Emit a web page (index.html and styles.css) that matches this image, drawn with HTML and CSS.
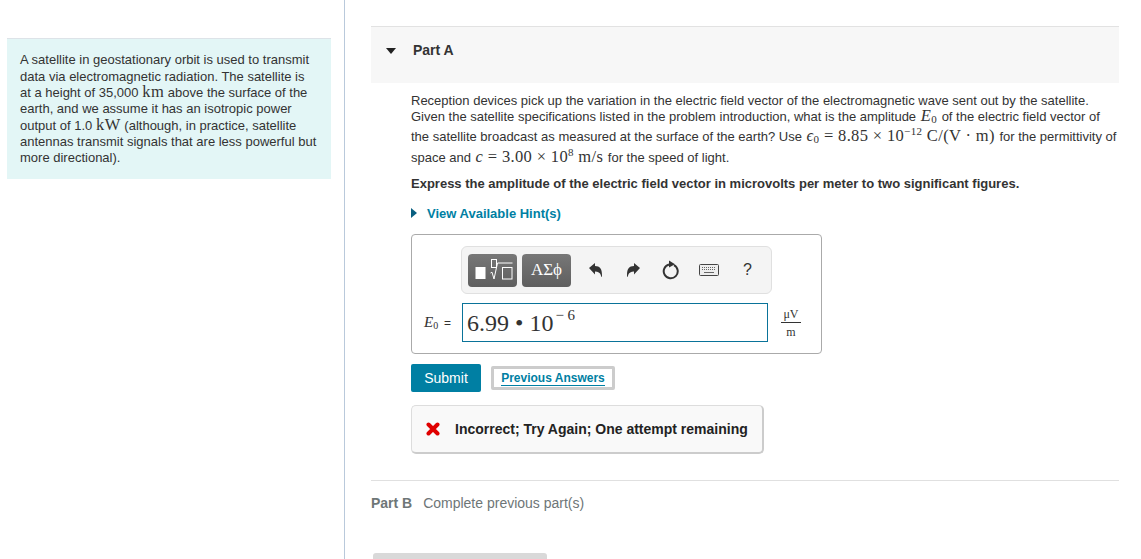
FILE: index.html
```html
<!DOCTYPE html>
<html lang="en">
<head>
    <meta charset="UTF-8">
    <meta name="viewport" content="width=device-width, initial-scale=1.0">
    <title>Part A</title>
    <link rel="stylesheet" href="styles.css">
</head>
<body>
    <div class="page">
        <aside class="left-col">
            <div class="intro">
                A satellite in geostationary orbit is used to transmit<br>
                data via electromagnetic radiation. The satellite is<br>
                at a height of 35,000 <span class="math">km</span> above the surface of the<br>
                earth, and we assume it has an isotropic power<br>
                output of 1.0 <span class="math">kW</span> (although, in practice, satellite<br>
                antennas transmit signals that are less powerful but<br>
                more directional).
            </div>
        </aside>
        <main class="right-col">
            <div class="part-head">
                <span class="caret-down"></span>
                <span class="part-title">Part A</span>
            </div>
            <div class="part-body">
                <p class="question">
                    <span class="q-line">Reception devices pick up the variation in the electric field vector of the electromagnetic wave sent out by the satellite.</span>
                    <span class="q-line">Given the satellite specifications listed in the problem introduction, what is the amplitude <span class="math big"><i>E</i><sub>0</sub></span> of the electric field vector of</span>
                    <span class="q-line tall">the satellite broadcast as measured at the surface of the earth? Use <span class="math big"><i>ϵ</i><sub>0</sub> = 8.85 × 10<sup>−12</sup> C/(V · m)</span> for the permittivity of</span>
                    <span class="q-line tall">space and <span class="math big"><i>c</i> = 3.00 × 10<sup>8</sup> m/s</span> for the speed of light.</span>
                </p>
                <p class="express">Express the amplitude of the electric field vector in microvolts per meter to two significant figures.</p>
                <div class="hint-row">
                    <span class="caret-right"></span>
                    <span class="hint-link">View Available Hint(s)</span>
                </div>

                <div class="answer-box">
                    <div class="toolbar">
                        <div class="tool-btn">
                            <svg width="40" height="26" viewBox="0 0 40 26">
                                <rect x="2.500" y="10" width="10" height="12" fill="#fff"/>
                                <rect x="18.500" y="2.500" width="5" height="8" fill="none" stroke="#fff"/>
                                <path d="M17.500 16l1.500-.8 2 6.800 3.500-16h15" fill="none" stroke="#fff"/>
                                <rect x="29.500" y="10.500" width="9.500" height="11.500" fill="none" stroke="#fff"/>
                            </svg>
                        </div>
                        <div class="tool-btn greek">ΑΣϕ</div>
                        <div class="tool-icons">
                            <svg width="16" height="16" viewBox="0 0 16 16">
                                <path d="M1 6l6-5v3c5 0 7 3 7 9 0 1-.2 2-.5 2-.4 0-.4-1-.7-2-.6-2.400-2.800-3.600-5.800-3.600v3z" fill="#333"/>
                            </svg>
                            <svg width="16" height="16" viewBox="0 0 16 16">
                                <path d="M15 6l-6-5v3c-5 0-7 3-7 9 0 1 .2 2 .5 2 .4 0 .4-1 .7-2 .6-2.400 2.800-3.600 5.800-3.600v3z" fill="#333"/>
                            </svg>
                            <svg width="18" height="20" viewBox="0 0 18 20">
                                <path d="M7 4.500a7 7 0 1 0 5 .6" fill="none" stroke="#333" stroke-width="2"/>
                                <path d="M7 0.500l6 3.800-6 3.200z" fill="#333"/>
                            </svg>
                            <svg width="20" height="12" viewBox="0 0 20 12">
                                <rect x="0.500" y="0.500" width="19" height="11" rx="1" fill="#eee" stroke="#444"/>
                                <path d="M3 3.500h14M3 5.500h14" stroke="#666" stroke-dasharray="1 1"/>
                                <path d="M5 8.500h10" stroke="#666"/>
                            </svg>
                            <span class="help">?</span>
                        </div>
                    </div>
                    <div class="input-row">
                        <span class="var-label"><i>E</i><sub>0</sub> <span class="eq">=</span></span>
                        <div class="input-field">6.99 • 10<sup>− 6</sup></div>
                        <span class="unit">
                            <span class="unit-top">μV</span>
                            <span class="unit-bottom">m</span>
                        </span>
                    </div>
                </div>

                <div class="actions">
                    <button class="submit-btn">Submit</button>
                    <button class="prev-btn"><span>Previous Answers</span></button>
                </div>

                <div class="feedback">
                    <svg width="14" height="14" viewBox="0 0 14 14">
                        <path d="M2.500 2.500l9 9M11.500 2.500l-9 9" stroke="#e00000" stroke-width="4" stroke-linecap="round"/>
                    </svg>
                    <span>Incorrect; Try Again; One attempt remaining</span>
                </div>
            </div>
            <div class="part-b">
                <b>Part B</b>
                <span>Complete previous part(s)</span>
            </div>
            <div class="next-bar"></div>
        </main>
    </div>
</body>
</html>
```

FILE: styles.css
```css
html, body {
    margin: 0;
    height: 100%;
    overflow: hidden;
}

body {
    font-family: 'Liberation Sans', Arial, sans-serif;
    font-size: 13px;
    color: #333;
    background-color: #fff;
}

.page {
    display: flex;
    height: 559px;
}

.left-col {
    flex: none;
    width: 324px;
    border-right: 1px solid #b9c9db;
    padding: 38px 13px 0 7px;
    margin-right: 26px;
}

.intro {
    background-color: #e3f6f6;
    border-top: 1px solid #dde3e8;
    padding: 13.400px 13px 12.600px;
    line-height: 16.330px;
    color: #333;
    height: 114px;
}

.math {
    font-family: 'Liberation Serif', serif;
    font-size: 16.500px;
    line-height: 0;
    letter-spacing: 0.500px;
}

.math.big {
    margin: 0 1px;
    letter-spacing: 0.350px;
}

.math sub, .math sup {
    font-size: 11px;
    line-height: 0;
}

.math sub {
    vertical-align: -2px;
}

.right-col {
    width: 748px;
    flex: none;
    padding-top: 26px;
}

.part-head {
    height: 57px;
    background-color: #f7f7f7;
    border-top: 1px solid #e2e2e2;
    box-sizing: border-box;
    display: flex;
    align-items: flex-start;
    padding: 15px 0 0 15px;
}

.caret-down {
    width: 0;
    height: 0;
    margin-top: 6px;
    border-left: 5px solid transparent;
    border-right: 5px solid transparent;
    border-top: 6px solid #222;
}

.part-title {
    margin-left: 17px;
    font-size: 14px;
    font-weight: bold;
    line-height: 16px;
}

.part-body {
    padding: 10px 0 0 40px;
}

.question {
    margin: 0;
}

.q-line {
    display: block;
    line-height: 16px;
    white-space: nowrap;
}

.q-line.tall {
    line-height: 20px;
}

.q-line + .q-line.tall {
    margin-top: 1.500px;
}

.express {
    margin: 8px 0 0;
    font-weight: bold;
    line-height: 16px;
}

.hint-row {
    display: flex;
    align-items: center;
    margin-top: 13px;
    height: 16px;
}

.caret-right {
    width: 0;
    height: 0;
    border-top: 5px solid transparent;
    border-bottom: 5px solid transparent;
    border-left: 6px solid #0a5f80;
}

.hint-link {
    margin-left: 10px;
    font-weight: bold;
    color: #007fa3;
}

.answer-box {
    width: 409px;
    height: 118px;
    margin-top: 13px;
    border: 1px solid #aaa;
    border-radius: 4px;
}

.toolbar {
    width: 311px;
    height: 48px;
    margin: 11px 0 0 49px;
    background-color: #f4f4f4;
    border: 1px solid #e0e0e0;
    border-radius: 6px;
    display: flex;
    align-items: center;
    padding-left: 6px;
    box-sizing: border-box;
    gap: 5px;
}

.tool-btn {
    width: 49px;
    height: 33px;
    border-radius: 4px;
    background: linear-gradient(#777, #5f5f5f);
    color: #fff;
    display: flex;
    align-items: center;
    justify-content: center;
}

.tool-btn.greek {
    font-family: 'Liberation Serif', serif;
    font-size: 17px;
}

.tool-icons {
    display: flex;
    align-items: center;
    margin-left: 12px;
    gap: 21px;
}

.tool-icons svg:nth-child(4) {
    margin-left: -2px;
}

.help {
    font-size: 16px;
    color: #333;
    margin-left: 3px;
}

.input-row {
    display: flex;
    align-items: center;
    margin-top: 9px;
    padding-left: 12px;
}

.var-label {
    font-family: 'Liberation Serif', serif;
    font-size: 15px;
    width: 38px;
    white-space: nowrap;
}

.var-label sub {
    font-size: 10px;
    line-height: 0;
    vertical-align: -2px;
}

.eq {
    font-family: 'Liberation Sans', sans-serif;
    font-size: 12px;
    margin-left: 2px;
}

.input-field {
    width: 306px;
    height: 39px;
    box-sizing: border-box;
    border: 1px solid #0a7399;
    font-family: 'Liberation Serif', serif;
    font-size: 24px;
    line-height: 39px;
    padding-left: 4px;
    white-space: nowrap;
}

.input-field sup {
    font-size: 15px;
    line-height: 0;
    vertical-align: 11px;
    margin-left: 2px;
}

.unit {
    display: flex;
    flex-direction: column;
    align-items: center;
    margin-left: 13px;
    width: 20px;
    font-family: 'Liberation Serif', serif;
    font-size: 12px;
    line-height: 14px;
}

.unit-top {
    width: 20px;
    text-align: center;
    border-bottom: 1px solid #333;
    padding-bottom: 1px;
}

.unit-bottom {
    padding-top: 2px;
}

.actions {
    display: flex;
    align-items: center;
    margin-top: 10px;
    gap: 10px;
}

.submit-btn {
    width: 70px;
    height: 28px;
    border: none;
    border-radius: 2px;
    background-color: #007fa3;
    color: #fff;
    font-family: inherit;
    font-size: 14px;
    padding: 0;
}

.prev-btn {
    width: 124px;
    height: 24px;
    box-sizing: border-box;
    border: 3px solid #ccc;
    border-radius: 2px;
    background-color: #fff;
    color: #007fa3;
    font-family: inherit;
    font-size: 12px;
    font-weight: bold;
    padding: 0;
}

.prev-btn span {
    border-bottom: 1px solid #007fa3;
}

.feedback {
    width: 350px;
    height: 46px;
    margin-top: 13px;
    display: flex;
    align-items: center;
    border: 1px solid #ddd;
    border-right: 2px solid #ccc;
    border-bottom: 2px solid #ccc;
    border-radius: 5px;
    background-color: #f9f9f9;
    font-weight: bold;
    font-size: 14px;
    color: #222;
}

.feedback svg {
    margin: 0 15px 0 14px;
}

.part-b {
    margin-top: 26px;
    border-top: 1px solid #e0e0e0;
    padding-top: 14px;
    font-size: 14px;
    line-height: 17px;
    color: #6e7677;
}

.part-b b {
    margin-right: 7px;
}

.next-bar {
    width: 174px;
    height: 10px;
    margin: 41px 0 0 2px;
    border-radius: 3px 3px 0 0;
    background-color: #d9d9d9;
}
```
